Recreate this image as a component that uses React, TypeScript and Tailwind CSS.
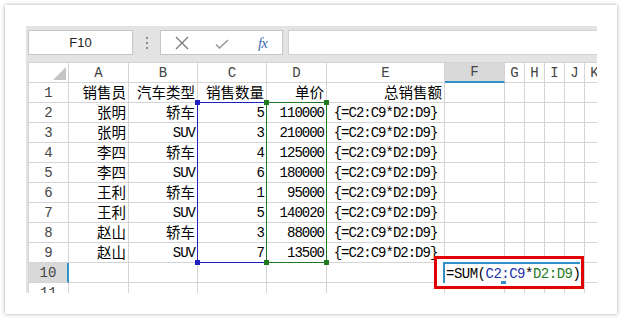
const cols = ["A", "B", "C", "D", "E", "F", "G", "H", "I", "J", "K"];
const F = "{=C2:C9*D2:D9}";

const rows: string[][] = [
  ["销售员", "汽车类型", "销售数量", "单价", "总销售额"],
  ["张明", "轿车", "5", "110000", F],
  ["张明", "SUV", "3", "210000", F],
  ["李四", "轿车", "4", "125000", F],
  ["李四", "SUV", "6", "180000", F],
  ["王利", "轿车", "1", "95000", F],
  ["王利", "SUV", "5", "140020", F],
  ["赵山", "轿车", "3", "88000", F],
  ["赵山", "SUV", "7", "13500", F],
  [],
  [],
];

const cjk = /[\u4e00-\u9fff]/;

function Cell({ text, col }: { text?: string; col: number }) {
  const isCjk = text ? cjk.test(text) : false;
  const align = col === 4 && text === F ? "justify-center" : "justify-end pr-[2px]";
  return (
    <div
      className={`h-5 border-r border-b border-[#d4d4d4] flex items-center ${align} leading-none whitespace-nowrap text-black ${
        isCjk
          ? "font-['Noto_Sans_CJK_SC',sans-serif] text-[14.5px]"
          : "font-['Liberation_Mono',monospace] text-[14px] tracking-[-1px] pt-[1px]"
      }`}
    >
      {text}
    </div>
  );
}

function Handle({ className }: { className: string }) {
  return <div className={`absolute w-[5px] h-[5px] ${className}`} />;
}

export default function App() {
  return (
    <div className="w-[623px] h-[320px] bg-white pt-[5px] pl-[5px] overflow-hidden">
      <div className="w-[612px] h-[309px] bg-white shadow-[0_0_4px_rgba(0,0,0,0.35)] pt-[21px] pl-[21px]">
        <div className="w-[571px] h-[267px] bg-[#e3e3e3] pl-[2px] pt-[4px] flex flex-col gap-[7px] overflow-hidden">
          {/* formula bar */}
          <div className="h-[25px] flex">
            <div className="w-[105px] h-full bg-white border border-[#c6c6c6] flex items-center justify-center font-['Liberation_Sans',sans-serif] text-[13px] text-[#222]">
              F10
            </div>
            <div className="w-[27px] flex flex-col items-center justify-center gap-[3px]">
              <span className="w-[2px] h-[2px] bg-[#8a8a8a]" />
              <span className="w-[2px] h-[2px] bg-[#8a8a8a]" />
              <span className="w-[2px] h-[2px] bg-[#8a8a8a]" />
            </div>
            <div className="w-[123px] h-full bg-white border border-[#c6c6c6] flex items-center">
              <svg width="14" height="14" viewBox="0 0 14 14" className="ml-[14px]">
                <path d="M1 1L13 13M13 1L1 13" stroke="#7a7a7a" strokeWidth="1.3" fill="none" />
              </svg>
              <svg width="14" height="10" viewBox="0 0 14 10" className="ml-[26px] mt-[2px]">
                <path d="M1 5.5L4.5 9L13 1" stroke="#9a9a9a" strokeWidth="1.6" fill="none" />
              </svg>
              <span className="ml-[29px] font-['Liberation_Serif',serif] italic text-[15px] text-[#3f6fb3] tracking-[-1px] leading-none mt-[1px]">
                fx
              </span>
            </div>
            <div className="w-[5px]" />
            <div className="flex-1 h-full bg-white border-y border-l border-[#d0d0d0]" />
          </div>

          {/* grid */}
          <div className="relative w-[569px] h-[231px] border-l border-t border-[#d4d4d4] bg-white overflow-hidden">
            <div className="grid grid-cols-[40px_60px_69px_69px_60px_118px_60px_20px_20px_20px_20px_20px]">
              <div className="h-5 border-r border-b border-[#d4d4d4] relative">
                <svg width="13" height="13" viewBox="0 0 13 13" className="absolute right-[2px] bottom-[2px]">
                  <polygon points="13,0 13,13 0,13" fill="#c4c4c4" />
                </svg>
              </div>
              {cols.map((c) => (
                <div
                  key={c}
                  className={`h-5 border-r border-[#d4d4d4] flex items-center justify-center leading-none font-['Liberation_Mono',monospace] text-[14px] text-[#444] ${
                    c === "F" ? "bg-[#d9d9d9] border-b-2 border-b-[#2f91c8]" : "border-b"
                  }`}
                >
                  {c}
                </div>
              ))}
              {rows.map((r, i) => (
                <div key={i} className="contents">
                  <div
                    className={`h-5 border-b border-[#d4d4d4] flex items-center justify-center leading-none pt-[1px] font-['Liberation_Mono',monospace] text-[14px] text-[#444] ${
                      i === 9 ? "bg-[#d9d9d9] border-r-2 border-r-[#2f91c8]" : "border-r"
                    }`}
                  >
                    {i + 1}
                  </div>
                  {cols.map((c, j) => (
                    <Cell key={c} text={r[j]} col={j} />
                  ))}
                </div>
              ))}
            </div>

            {/* reference ranges */}
            <div className="absolute left-[168px] top-[39px] w-[70px] h-[161px] border border-[#2020c0]" />
            <div className="absolute left-[237px] top-[39px] w-[61px] h-[161px] border border-[#1f7a1f]" />
            <Handle className="left-[166px] top-[37px] bg-[#2020c0]" />
            <Handle className="left-[166px] top-[197px] bg-[#2020c0]" />
            <Handle className="left-[235px] top-[37px] bg-[#1f7a1f]" />
            <Handle className="left-[295px] top-[37px] bg-[#1f7a1f]" />
            <Handle className="left-[235px] top-[197px] bg-[#1f7a1f]" />
            <Handle className="left-[295px] top-[197px] bg-[#1f7a1f]" />

            {/* cell editor */}
            <div className="absolute left-[405px] top-[193px] w-[150px] h-[33px] border-[3px] border-[#e30000] bg-white" />
            <div className="absolute left-[414px] top-[199px] w-[137px] h-[21px] border-t-2 border-l-2 border-[#2f91c8] flex items-center pl-[1px] pt-[1px] leading-none font-['Liberation_Mono',monospace] text-[14px] tracking-[-0.5px] text-black whitespace-nowrap">
              =SUM(<span className="text-[#2030a8]">C2:C9</span>*<span className="text-[#1f7a1f]">D2:D9</span>)
            </div>
            <div className="absolute left-[472px] top-[218px] w-[5px] h-[3px] bg-[#2f91c8]" />
          </div>
        </div>
      </div>
    </div>
  );
}
